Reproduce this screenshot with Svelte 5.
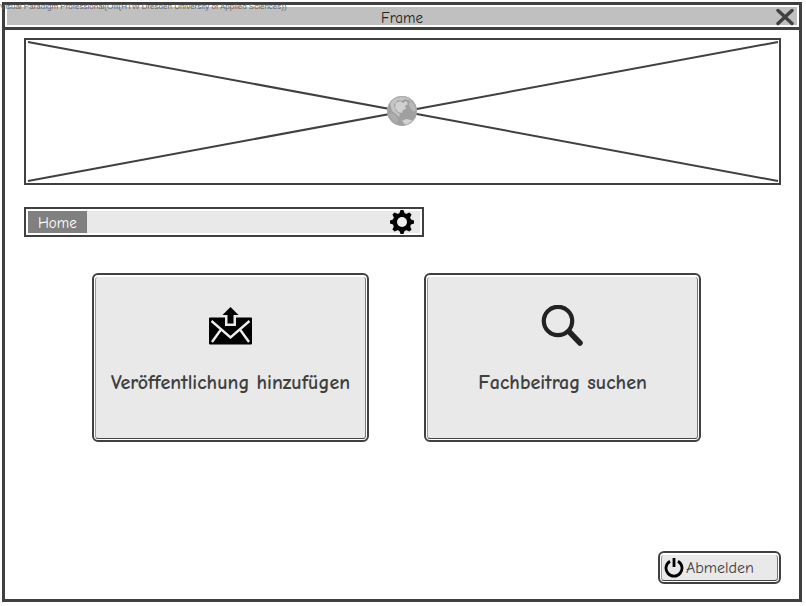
<script>
  const watermark = 'Visual Paradigm Professional(Olli(HTW Dresden University of Applied Sciences))';
</script>

<div class="page">
  <p class="watermark">{watermark}</p>
  <main class="frame">
    <header class="titlebar">
      <h1>Frame</h1>
      <button class="close" aria-label="Close">
        <svg width="18" height="18" viewBox="0 0 18 18"><path d="M2 2.5 16 15.500M16 2.500 2 15.500" stroke="#404040" stroke-width="3.400" stroke-linecap="round" /></svg>
      </button>
    </header>

    <div class="content">
      <div class="banner">
        <svg class="cross" viewBox="0 0 750 139" preserveAspectRatio="none" aria-hidden="true">
          <path d="M0 0 750 139M0 139 750 0" stroke="#404040" stroke-width="2" vector-effect="non-scaling-stroke" />
        </svg>
        <svg class="globe" width="32" height="32" viewBox="0 0 32 32" role="img" aria-label="Globe">
          <circle cx="15" cy="15" r="15" fill="#a0a0a0" />
          <path d="M3 7Q8 0 16 0Q22 1 25 5L21 4 18 3 15 5 11 4 9 7 7 9 8 13 10 16 13 18 12 21 9 18 5 15Z" fill="#c4c4c4" />
          <path d="M9 7 13 5 16 7 19 5 21 8 18 10 19 13 16 14 15 17 11 16 8 12Z" fill="#d0d0d0" />
          <path d="M23 5 27 8 29 14 27 16 24 13 22 9Z" fill="#b8b8b8" />
          <path d="M15 25 19 23 24 24 26 25Q23 29 18 29L17 27Z" fill="#d2d2d2" />
          <path d="M4 17 8 19 11 23 10 27Q4 24 2 19Z" fill="#adadad" />
          <circle cx="15" cy="15" r="14.500" fill="none" stroke="#aaa" />
        </svg>
      </div>

      <nav class="menu">
        <a href="#home">Home</a>
        <button class="settings" aria-label="Settings">
          <svg width="24" height="24" viewBox="0 0 24 24">
            <g fill="#000">
              {#each [0, 45, 90, 135] as angle}
                <path d="M9.500 3 10.500 0H13.500L14.500 3V21L13.500 24H10.500L9.500 21Z" transform="rotate({angle} 12 12)" />
              {/each}
              <circle cx="12" cy="12" r="9.300" />
            </g>
            <circle cx="12" cy="12" r="5" fill="#eee" />
          </svg>
        </button>
      </nav>

      <div class="cards">
        <button class="box card">
          <span class="face">
            <svg width="44" height="44" viewBox="0 0 44 44" aria-hidden="true">
              <rect x="0" y="12.500" width="43" height="27" rx="1" fill="#000" />
              <path d="M2.500 16 21.500 32.500 40.500 16M12 24.500 3 37M31 24.500 40 37" fill="none" stroke="#eee" stroke-width="2.400" />
              <path d="M16 12V21H27V12Z" fill="#e9e9e9" />
              <path d="M21.500 2 29.500 10H24.500V18.500H18.500V10H13.500Z" fill="#000" />
            </svg>
            <span>Veröffentlichung hinzufügen</span>
          </span>
        </button>
        <button class="box card">
          <span class="face">
            <svg width="44" height="44" viewBox="0 0 44 44" aria-hidden="true">
              <circle cx="17" cy="16" r="14.200" fill="none" stroke="#222" stroke-width="4.200" />
              <path d="M28 26.500 39 38" stroke="#222" stroke-width="5.500" stroke-linecap="round" />
            </svg>
            <span>Fachbeitrag suchen</span>
          </span>
        </button>
      </div>

      <button class="box logout">
        <span class="face">
          <svg width="20" height="20" viewBox="0 0 20 20" aria-hidden="true">
            <path d="M6 3.200A8 8 0 1 0 14 3.200M10 0V9" fill="none" stroke="#000" stroke-width="2.800" />
          </svg>
          <span>Abmelden</span>
        </span>
      </button>
    </div>
  </main>
</div>

<style>
  :global(body) {
    margin: 0;
    background: #fff;
  }
  .page {
    box-sizing: border-box;
    display: flex;
    min-height: 100vh;
    padding: 2px 4px 4px 2px;
    position: relative;
    overflow: hidden;
    font-family: "Comic Sans MS", "Comic Neue", "Noto Sans", sans-serif;
    font-variant-ligatures: none;
    color: #404040;
  }
  button {
    margin: 0;
    padding: 0;
    border: 0;
    background: none;
    font: inherit;
    color: inherit;
    cursor: pointer;
  }
  svg {
    display: block;
  }
  .watermark {
    position: absolute;
    top: 1px;
    left: 0;
    margin: 0;
    font: 8px/12px "Liberation Sans", sans-serif;
    color: #666;
    white-space: nowrap;
    z-index: 1;
  }
  .frame {
    flex: 1;
    display: flex;
    flex-direction: column;
    border: 3px solid #404040;
  }
  .titlebar {
    display: grid;
    grid-template-columns: 1fr auto 1fr;
    align-items: center;
    border: 2px solid #fff;
    background: #c0c0c0;
    height: 18px;
    box-shadow: 0 3px #404040;
    margin-bottom: 3px;
  }
  .titlebar h1 {
    grid-column: 2;
    margin: 0;
    padding-top: 2px;
    font-size: 15px;
    line-height: 18px;
    font-weight: 400;
    color: #222;
  }
  .close {
    justify-self: end;
    margin-right: 3px;
  }
  .content {
    flex: 1;
    display: flex;
    flex-direction: column;
    padding: 8px 18px 15px 19px;
  }
  .banner {
    display: grid;
    place-items: center;
    height: 143px;
    border: 2px solid #404040;
  }
  .banner > svg {
    grid-area: 1 / 1;
  }
  .cross {
    width: calc(100% - 3px);
    height: 139px;
    overflow: visible;
  }
  .menu {
    display: flex;
    justify-content: space-between;
    box-sizing: border-box;
    width: 400px;
    max-width: 100%;
    margin-top: 22px;
    border: 2px solid #404040;
    padding: 2px;
    background: #e9e9e9 content-box;
  }
  .menu a {
    padding: 2px 10px 0;
    background: #808080;
    color: #fff;
    font-size: 15px;
    line-height: 20px;
    text-decoration: none;
  }
  .settings {
    height: 22px;
    margin-right: 6px;
    display: flex;
    align-items: center;
  }
  .box {
    display: flex;
    border: 2px solid #404040;
    border-radius: 6px;
    padding: 2px 1px 1px;
    background: #fff;
  }
  .face {
    flex: 1;
    display: flex;
    align-items: center;
    border: solid #444;
    border-width: 0 1px 1px;
    border-left-color: #999;
    border-right-color: #777;
    border-radius: 3px;
    background: #e9e9e9;
  }
  .cards {
    display: grid;
    grid-template-columns: 1fr 1fr;
    gap: 55px;
    margin: 36px 80px 32px 68px;
  }
  .card .face {
    flex-direction: column;
    gap: 22px;
    padding: 28px 8px 43px;
    font-size: 20px;
    line-height: 24px;
    font-weight: 600;
  }
  .logout {
    align-self: flex-end;
    width: 123px;
    margin-top: auto;
  }
  .logout .face {
    gap: 2px;
    padding: 3px 2px 2px;
    font-size: 16px;
    line-height: 20px;
  }
</style>
